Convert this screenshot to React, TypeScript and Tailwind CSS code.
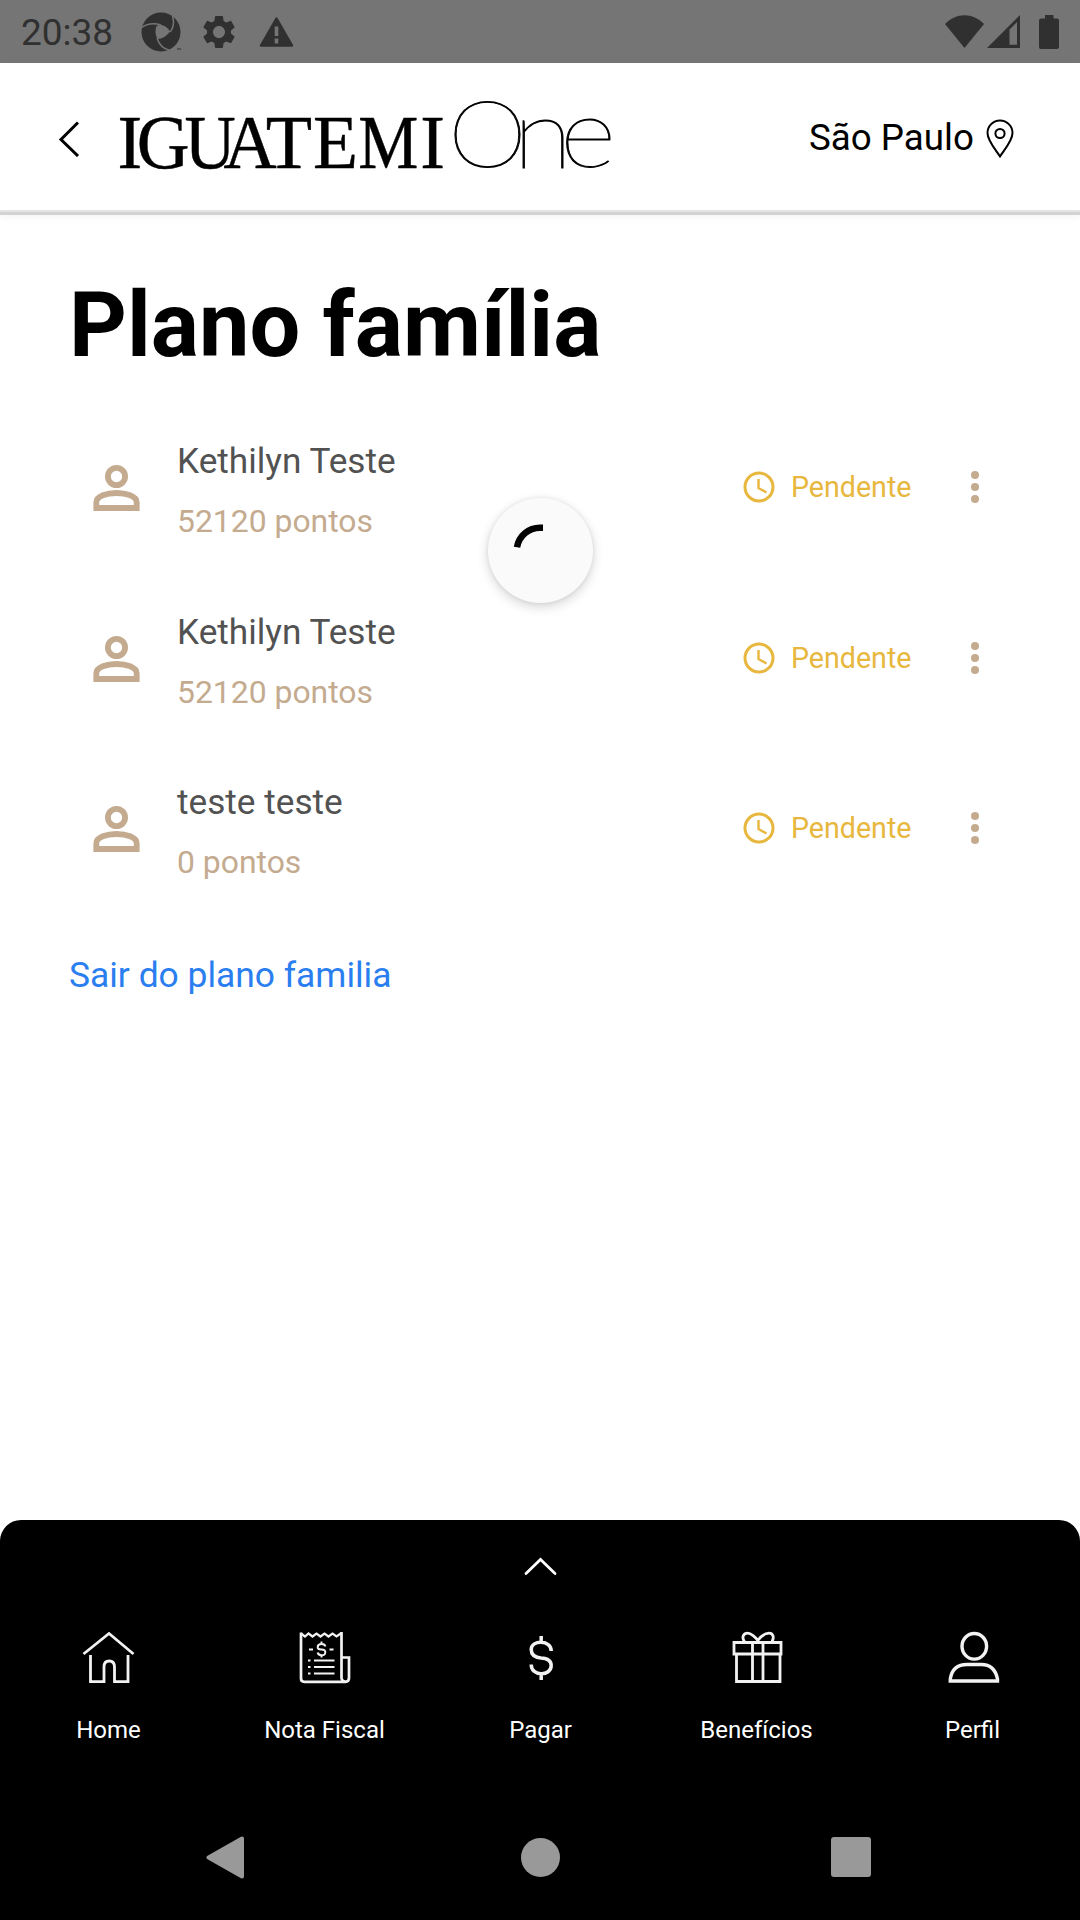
import React from "react";

const members = [
  { name: "Kethilyn Teste", points: "52120 pontos" },
  { name: "Kethilyn Teste", points: "52120 pontos" },
  { name: "teste teste", points: "0 pontos" },
];

function StatusBar() {
  return (
    <div className="flex h-[63px] shrink-0 items-center bg-[#757575] text-[#303030]">
      <span className="mt-[2px] ml-[21px] w-[94px] text-[37px] leading-[61px] whitespace-nowrap">20:38</span>
      <svg className="ml-[26px] h-10 w-10" viewBox="0 0 40 40">
        <circle cx="20" cy="20" r="19.5" fill="currentColor" />
        <path d="M15.500 14C20 11.500 26 14 29 19.500C26 24 21 27 16.500 27C14 23 14 18 15.500 14Z" fill="#757575" />
        <path d="M0 16C6 11.500 13 11 20 13M29 20C33 15 33 9 31.500 4M16 26C18 33 23 37 29 38.500" fill="none" stroke="#757575" strokeWidth="1.500" />
        <path d="M36 37h4" stroke="currentColor" strokeWidth="1" />
      </svg>
      <svg className="ml-[18px] h-10 w-10" viewBox="0 0 24 24" fill="currentColor">
        <path d="M19.140 12.940c.04-.3.06-.61.06-.94 0-.32-.02-.64-.07-.94l2.030-1.580c.18-.14.23-.41.12-.61l-1.920-3.320c-.12-.22-.37-.29-.59-.22l-2.390.96c-.5-.38-1.030-.7-1.620-.94l-.36-2.540c-.04-.24-.24-.41-.48-.41h-3.840c-.24 0-.43.17-.47.41l-.36 2.540c-.59.24-1.130.57-1.620.94l-2.390-.96c-.22-.08-.47 0-.59.22L2.740 8.870c-.12.21-.08.47.12.61l2.030 1.580c-.05.3-.09.63-.09.94s.02.64.07.94l-2.030 1.580c-.18.14-.23.41-.12.61l1.920 3.320c.12.22.37.29.59.22l2.390-.96c.5.38 1.030.7 1.620.94l.36 2.540c.05.24.24.41.48.41h3.840c.24 0 .44-.17.47-.41l.36-2.540c.59-.24 1.130-.56 1.620-.94l2.390.96c.22.08.47 0 .59-.22l1.920-3.320c.12-.22.07-.47-.12-.61l-2.010-1.580zM12 15.600c-1.980 0-3.600-1.620-3.600-3.600s1.620-3.600 3.600-3.600 3.600 1.620 3.600 3.600-1.620 3.600-3.600 3.600z" />
      </svg>
      <svg className="ml-5 h-[30px] w-[35px]" viewBox="0 0 35 30">
        <path d="M17.500 1.500L33 28.500H2Z" fill="currentColor" stroke="currentColor" strokeWidth="2.500" strokeLinejoin="round" />
        <path d="M17.500 9.500v9.500M17.500 21.500v5" stroke="#757575" strokeWidth="3.600" />
      </svg>
      <div className="ml-auto flex items-center pr-[21px]">
        <svg className="h-[33px] w-[39px]" viewBox="0 0 39 33">
          <path d="M0 9C11-2.800 28-2.800 39 9L19.500 33Z" fill="currentColor" />
        </svg>
        <svg className="ml-[3px] h-[33px] w-[33px]" viewBox="0 0 33 33">
          <path fillRule="evenodd" d="M33 0V33H0ZM30 7L22.500 14.500V29.700H30Z" fill="currentColor" />
        </svg>
        <svg className="ml-[19px] h-[34px] w-5" viewBox="0 0 20 34">
          <path d="M6 0h8.500v3.500H18a2 2 0 0 1 2 2V32a2 2 0 0 1-2 2H2a2 2 0 0 1-2-2V5.500a2 2 0 0 1 2-2h4Z" fill="currentColor" />
        </svg>
      </div>
    </div>
  );
}

// Letter, left edge and advance width of the serif wordmark.
const serifLetters: [string, number, number][] = [
  ["I", -1.5, 24.7],
  ["G", 17.7, 52.8],
  ["U", 65.4, 51.2],
  ["A", 104.6, 53.2],
  ["T", 146.7, 46.3],
  ["E", 194.1, 45],
  ["M", 239.2, 60.1],
  ["I", 301.2, 24.7],
];

function Logo() {
  return (
    <svg className="ml-[39px] h-20 w-[500px] overflow-visible" viewBox="0 0 500 80" role="img" aria-label="Iguatemi One">
      {/* The horizontal scale widens the stems more than the hairlines. */}
      <g transform="scale(3 1)" fontFamily="Liberation Serif, serif" fontSize="77" stroke="#000" strokeWidth="0.450">
        {serifLetters.map(([c, x, w], i) => (
          <text key={i} x={x / 3} y="71" textLength={w / 3} lengthAdjust="spacingAndGlyphs">
            {c}
          </text>
        ))}
      </g>
      <g fontFamily="Lato, sans-serif" fontWeight="100" stroke="#000" strokeWidth="0.900">
        <text x="329" y="70" fontSize="92.500" textLength="79" lengthAdjust="spacingAndGlyphs">O</text>
        <text x="394" y="71" fontSize="96" textLength="59.500" lengthAdjust="spacingAndGlyphs">n</text>
        <text x="441" y="70" fontSize="96" textLength="56" lengthAdjust="spacingAndGlyphs">e</text>
      </g>
    </svg>
  );
}

function Header() {
  return (
    <header className="flex h-[152px] shrink-0 items-start border-b-[3px] border-[#d3d3d3] bg-white shadow-[0_2px_8px_rgba(0,0,0,0.05)]">
      <div className="flex h-[149px] w-full items-center border-b-2 border-[#e4e4e4]">
        <svg className="mt-[5px] ml-[58px] h-9 w-[22px]" viewBox="0 0 22 36" fill="none" stroke="#000" strokeWidth="3">
          <path d="M20 1.500L3 18.500L20 35" />
        </svg>
        <Logo />
        <div className="ml-auto flex items-center pr-[66px]">
          <span className="mt-[2px] text-[36.750px] leading-[50px] whitespace-nowrap text-black">São Paulo</span>
          <svg className="mt-[5px] ml-3 h-10 w-7" viewBox="0 0 28 40" fill="none" stroke="#000" strokeWidth="2">
            <path d="M14 37.500C9 30 1.500 21.500 1.500 14A12.500 12.500 0 0 1 26.500 14C26.500 21.500 19 30 14 37.500Z" />
            <circle cx="14" cy="14.500" r="4.600" />
          </svg>
        </div>
      </div>
    </header>
  );
}

function MemberRow({ name, points }: { name: string; points: string }) {
  return (
    <li className="flex h-[170.600px] items-start">
      <svg className="mt-[62px] ml-[92px] h-12 w-[49px] shrink-0" viewBox="0 0 49 48" fill="none" stroke="#c4ab8f" strokeWidth="5.800">
        <circle cx="24.500" cy="12.500" r="8.600" />
        <path d="M4.300 44V38.500C4.300 32 15 29 24.500 29S44.700 32 44.700 38.500V44Z" />
      </svg>
      <div className="mt-[29px] ml-9 flex-1">
        <p className="text-[35.200px] leading-[60px] text-[#525252]">{name}</p>
        <p className="text-[31.900px] leading-[60px] text-[#c4ab8f]">{points}</p>
      </div>
      <div className="mt-[55px] mr-[97px] flex h-[60px] items-center">
        <svg className="h-8 w-8" viewBox="0 0 32 32" fill="none" stroke="#e7b73e" strokeWidth="3">
          <circle cx="16" cy="16" r="14" />
          <path d="M15.500 8V17L23.500 21.500" strokeWidth="2.400" />
        </svg>
        <span className="ml-4 w-[121px] text-[28.600px] leading-[60px] whitespace-nowrap text-[#e7b73e]">Pendente</span>
        <svg className="ml-[55px] h-8 w-4" viewBox="0 0 16 32" fill="#c4ab8f">
          <circle cx="8" cy="4" r="4" />
          <circle cx="8" cy="16" r="4" />
          <circle cx="8" cy="28" r="4" />
        </svg>
      </div>
    </li>
  );
}

function Spinner() {
  return (
    <div className="absolute top-[498px] left-[487.500px] flex h-[105px] w-[105px] items-center justify-center rounded-full bg-[#fafafa] shadow-[0_4px_12px_rgba(0,0,0,0.16),0_0_5px_rgba(0,0,0,0.08)]">
      <svg className="h-[60px] w-[60px]" viewBox="0 0 60 60" fill="none">
        <path d="M33 6.700H30A23.300 23.300 0 0 0 7 26.300" stroke="#000" strokeWidth="6.500" />
      </svg>
    </div>
  );
}

const iconClass = "h-[51px] w-[51px] overflow-visible";

function HomeIcon() {
  return (
    <svg className={iconClass} viewBox="0 0 51 51" fill="none" stroke="#f2f2f2" strokeWidth="2.800">
      <path d="M0.500 22L26 1.500L50.500 22" />
      <path d="M7.500 23V49.700H21V35Q21 29 26.200 29T31.500 35V49.700H45V23" />
    </svg>
  );
}

function ReceiptIcon() {
  return (
    <svg className={iconClass} viewBox="-0.500 0 51 51" fill="none" stroke="#f2f2f2" strokeWidth="2.700">
      <path d="M1.500 0.500V46.500Q1.500 49.800 5 49.800H46Q49.500 49.800 49.500 46V25.500H42" />
      <path d="M42 0V45.500Q42 49.500 46 49.500" />
      <path d="M1.500 1.500L5.500 4.500L9 1.500L13 4.500L17 1.500L21 4.500L25 1.500L29 4.500L33 1.500L37 4.500L42 1" strokeWidth="2.200" />
      <path d="M14.500 28.500H35M14.500 35H35M14.500 41.500H35M8.500 28.500h2.500M8.500 35h2.500M8.500 41.500h2.500M9.500 17.500h4M30 17.500h4" strokeWidth="2" />
      <path d="M25.800 14.500Q25.500 12 22 12T18.200 14.800T22 17.500T25.800 20.500T22 23.200T18.200 20.500M22 9.500V12M22 23V25.500" strokeWidth="2" />
    </svg>
  );
}

function DollarIcon() {
  return (
    <svg className={iconClass} viewBox="-0.500 0 51 51" fill="none" stroke="#f2f2f2" strokeWidth="3.500">
      <path d="M35.700 19C36 7.500 15.700 7.500 15.700 17.500C15.700 23 20 25.500 25.500 26C31 26.300 35.700 28.500 35.700 33.500C35.700 44.500 15.700 45 15.700 32.500M25.700 4V10M25.700 42V48" />
    </svg>
  );
}

function GiftIcon() {
  return (
    <svg className={iconClass} viewBox="-1.500 0 51 51" fill="none" stroke="#f2f2f2" strokeWidth="2.800">
      <path d="M1.500 10.500H48.500V22H1.500ZM4 22V49.500H47.500V22M20 10.500V49.500M30.500 10.500V49.500" />
      <path d="M12 9.500C8.500 5 11.500 1.200 15 1.200S23 5 25.300 8.500C28 5 32.500 1.200 36.500 1.200S42 5 39.500 9.500" />
    </svg>
  );
}

function ProfileIcon() {
  return (
    <svg className={iconClass} viewBox="-1.500 0 51 51" fill="none" stroke="#f2f2f2" strokeWidth="3.400">
      <ellipse cx="25.800" cy="14.300" rx="12.300" ry="12.800" />
      <path d="M1.800 49V47Q4 32.500 18.500 32.500H33Q46 32.500 49 47V49Z" />
    </svg>
  );
}

const tabs = [
  { label: "Home", Icon: HomeIcon },
  { label: "Nota Fiscal", Icon: ReceiptIcon },
  { label: "Pagar", Icon: DollarIcon },
  { label: "Benefícios", Icon: GiftIcon },
  { label: "Perfil", Icon: ProfileIcon },
];

function BottomBar() {
  return (
    <nav className="flex h-[400px] shrink-0 flex-col rounded-t-[21px] bg-black text-white">
      <div className="flex h-28 justify-center">
        <svg className="mt-9 h-5 w-[34px]" viewBox="-0.500 0 34 20" fill="none" stroke="#fff" strokeWidth="2.800">
          <path d="M2.500 17.500L17 3.500L31.500 17.500" strokeLinecap="round" />
        </svg>
      </div>
      <div className="grid grid-cols-5">
        {tabs.map(({ label, Icon }) => (
          <div key={label} className="flex flex-col items-center pl-px">
            <Icon />
            <span className="mt-[27px] text-[24px] leading-[40px] whitespace-nowrap">{label}</span>
          </div>
        ))}
      </div>
      <div className="mt-[66px] grid h-[82px] grid-cols-[450px_180px_450px] items-center">
        <svg className="ml-[206px] h-[43px] w-[38px]" viewBox="0 0 38 43">
          <path d="M36 2.500V40.500L2.500 21.500Z" fill="#999" stroke="#999" strokeWidth="4" strokeLinejoin="round" />
        </svg>
        <div className="h-[39px] w-[39px] justify-self-center rounded-full bg-[#999]" />
        <div className="ml-[201px] h-10 w-10 rounded-[3px] bg-[#999]" />
      </div>
    </nav>
  );
}

export default function App() {
  return (
    <div className="relative flex h-[1920px] w-[1080px] flex-col overflow-hidden bg-white font-['Roboto',sans-serif]">
      <StatusBar />
      <Header />
      <main className="flex flex-1 flex-col">
        <h1 className="mt-[59px] ml-[69px] text-[90px] leading-[103px] font-bold text-black">Plano família</h1>
        <ul className="mt-[25px]">
          {members.map((m, i) => (
            <MemberRow key={i} {...m} />
          ))}
        </ul>
        <a className="mt-[31px] ml-[69px] text-[35.400px] leading-[60px] text-[#2a7ef0]">Sair do plano familia</a>
      </main>
      <BottomBar />
      <Spinner />
    </div>
  );
}
